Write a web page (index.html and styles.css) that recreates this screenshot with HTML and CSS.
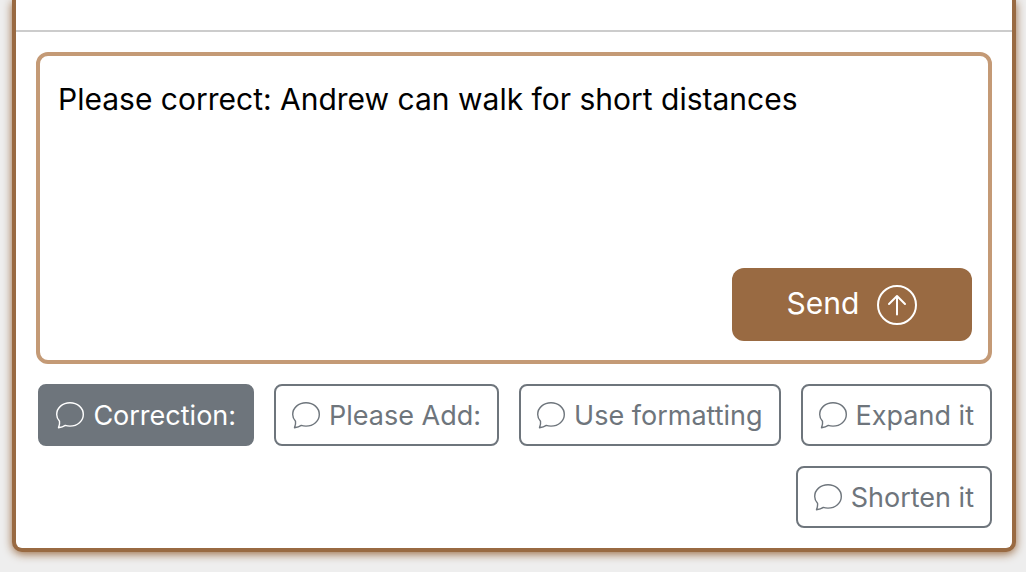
FILE: index.html
```html
<!DOCTYPE html>
<html lang="en">
<head>
    <meta charset="UTF-8">
    <meta name="viewport" content="width=device-width, initial-scale=1.0">
    <title>Chat</title>
    <link rel="stylesheet" href="styles.css">
</head>
<body>
    <svg class="symbols" aria-hidden="true">
        <symbol id="chat" viewBox="0 0 28 28">
            <path d="M3.5 20.2C1.7 18.3 .7 16 .7 13.4C.7 6.9 6.5 1.7 14 1.7S27.3 6.9 27.3 13.4S21.5 25.1 14 25.1C12 25.1 10.6 24.9 9.3 24.4C7.2 25.8 4.8 26.4 2.5 26.7C3.1 24.9 4 22.6 3.5 20.2Z"/>
        </symbol>
    </svg>
    <div class="chat-panel">
        <div class="messages"></div>
        <form class="chat-form">
            <div class="message-box">
                <textarea id="message" aria-label="Message" spellcheck="false">Please correct: Andrew can walk for short distances</textarea>
                <button type="button" class="send">
                    <span>Send</span>
                    <svg viewBox="0 0 40 40" aria-hidden="true">
                        <circle cx="20" cy="20" r="19"/>
                        <path d="M20 29.5V11.5M12 19L20 11L28 19"/>
                    </svg>
                </button>
            </div>
            <div class="prompts">
                <button type="button" class="prompt active"><svg><use href="#chat"/></svg>Correction:</button>
                <button type="button" class="prompt"><svg><use href="#chat"/></svg>Please Add:</button>
                <button type="button" class="prompt"><svg><use href="#chat"/></svg>Use formatting</button>
                <button type="button" class="prompt"><svg><use href="#chat"/></svg>Expand it</button>
                <button type="button" class="prompt"><svg><use href="#chat"/></svg>Shorten it</button>
            </div>
        </form>
    </div>

    <script>
        const message = document.getElementById('message');
        const prompts = document.querySelectorAll('.prompt');

        prompts.forEach(prompt => {
            prompt.addEventListener('click', () => {
                prompts.forEach(p => p.classList.remove('active'));
                prompt.classList.add('active');
                message.focus();
            });
        });
    </script>
</body>
</html>
```
FILE: styles.css
```css
* {
    box-sizing: border-box;
}
body {
    margin: 0;
    padding: 0 10px 20px 12px;
    background-color: #eeeeee;
    font-family: Inter, Roboto, sans-serif;
}
.symbols {
    display: none;
}
.chat-panel {
    background-color: #fff;
    border: 4px solid #996a42;
    border-top: none;
    border-radius: 0 0 10px 10px;
    box-shadow: 0 2px 10px #996a42;
}
.messages {
    height: 32px;
    border-bottom: 2px solid #ccc;
}
.chat-form {
    padding: 20px;
}
.message-box {
    display: flex;
    flex-direction: column;
    padding: 20px 16px 19px 18px;
    border: 4px solid #c49a76;
    border-radius: 12px;
}
textarea {
    width: 100%;
    height: 192px;
    padding: 0;
    border: none;
    outline: none;
    resize: none;
    background: none;
    color: #000;
    font-family: inherit;
    font-size: 30px;
    line-height: 46px;
}
button {
    display: flex;
    align-items: center;
    justify-content: center;
    font-family: inherit;
    cursor: pointer;
}
svg {
    fill: none;
    stroke: currentColor;
    stroke-linecap: round;
    stroke-linejoin: round;
}
.send {
    align-self: flex-end;
    gap: 18px;
    width: 240px;
    height: 73px;
    padding: 0;
    border: none;
    border-radius: 12px;
    background-color: #996a42;
    color: #fff;
    font-size: 30px;
}
.send span {
    padding-bottom: 4px;
}
.send svg {
    width: 40px;
    height: 40px;
    stroke-width: 2;
}
.prompts {
    display: flex;
    flex-wrap: wrap;
    justify-content: flex-end;
    gap: 20px;
    margin-top: 20px;
}
.prompt {
    gap: 9px;
    height: 62px;
    padding: 0 16px;
    border: 2px solid #6e757c;
    border-radius: 8px;
    background-color: #fff;
    color: #6e757c;
    font-size: 27px;
}
.prompt svg {
    width: 28px;
    height: 28px;
    stroke-width: 1.4;
}
.prompt.active {
    background-color: #6e757c;
    color: #fff;
}
```
